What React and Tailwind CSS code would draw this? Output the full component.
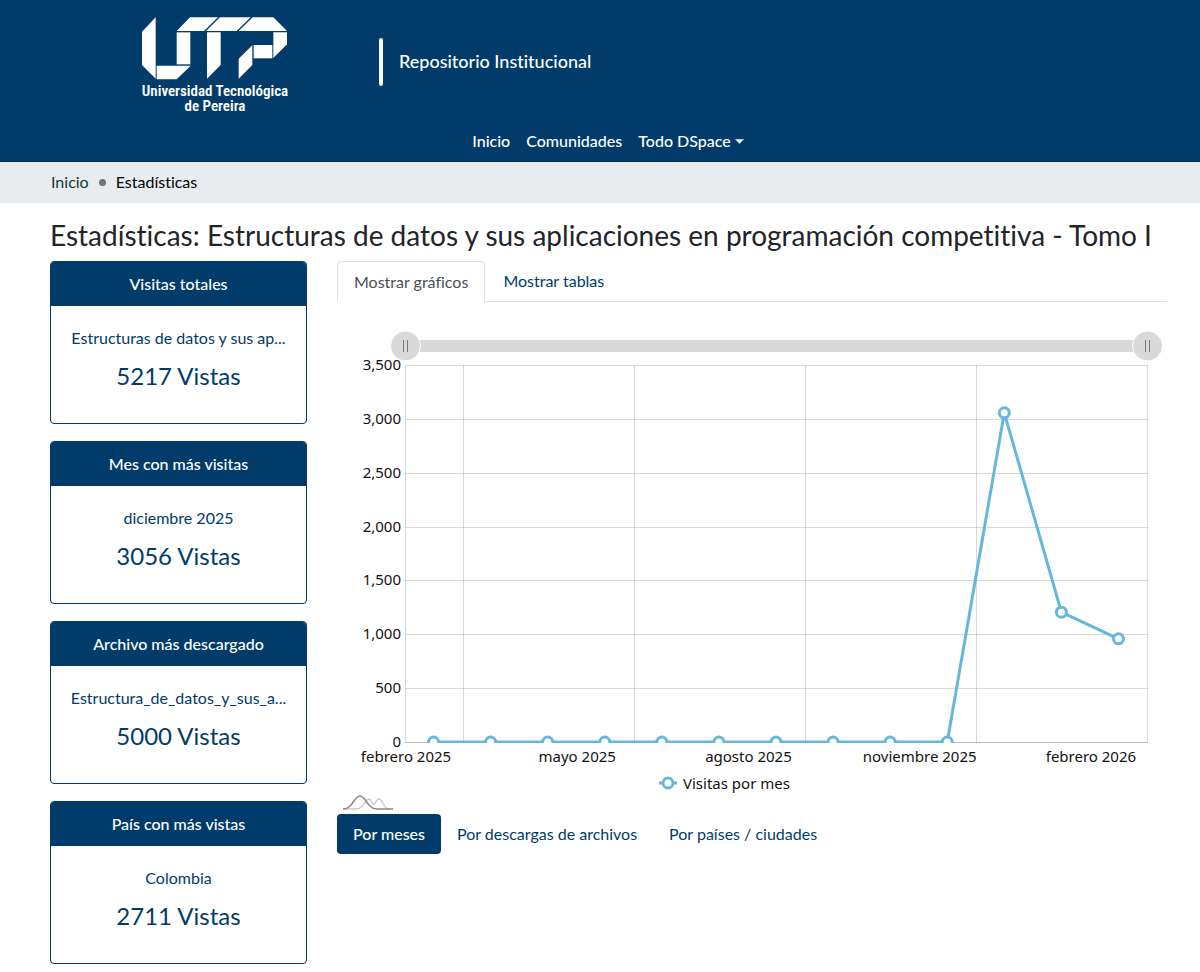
import { useState } from "react";

const cards = [
  { title: "Visitas totales", label: "Estructuras de datos y sus ap...", value: "5217 Vistas" },
  { title: "Mes con más visitas", label: "diciembre 2025", value: "3056 Vistas" },
  { title: "Archivo más descargado", label: "Estructura_de_datos_y_sus_a...", value: "5000 Vistas" },
  { title: "País con más vistas", label: "Colombia", value: "2711 Vistas" },
];

const visits = [0, 0, 0, 0, 0, 0, 0, 0, 0, 0, 3056, 1205, 958];

const monthLabels = [
  "febrero 2025",
  "mayo 2025",
  "agosto 2025",
  "noviembre 2025",
  "febrero 2026",
];

const reports = ["Por meses", "Por descargas de archivos", "Por países / ciudades"];

// plot area inside the chart
const LEFT = 68;
const RIGHT = 810;
const TOP = 55;
const BOTTOM = 432;
const STEP = (RIGHT - LEFT) / visits.length;

const xAt = (i) => LEFT + STEP * (i + 0.5);
const yAt = (v) => BOTTOM - (v / 3500) * (BOTTOM - TOP);

const Logo = () => (
  <a href="#" className="block w-[148px] text-white">
    <svg viewBox="33 48 441 192" className="w-[147px] h-[64px]" fill="currentColor" aria-hidden="true">
      <path d="M36 95 77 52V236L36 195Z" />
      <path d="M80 197H182L140 238H80Z" />
      <path d="M140 97H181V193H140Z" />
      <path d="M140 93 180 52H264L222 93Z" />
      <path d="M228 93 270 52H362L320 93Z" />
      <path d="M326 93 368 52H430L471 93Z" />
      <path d="M231 97H272V195L231 236Z" />
      <path d="M430 97H471V133L430 174Z" />
      <path d="M371 135H427V175H371Z" />
      <path d="M326 176 367 136V195L326 236Z" />
    </svg>
    <span className="flex flex-col items-center mt-1 font-['Roboto_Condensed','Lato',sans-serif] text-[15px] leading-[15px] font-semibold whitespace-nowrap">
      <span>Universidad Tecnológica</span>
      <span>de Pereira</span>
    </span>
  </a>
);

const Header = () => (
  <header className="bg-[#003b6a] border-b border-[#00284a] text-white">
    <div className="flex pl-[141px] pt-4 h-[121px]">
      <Logo />
      <div className="flex items-center gap-4 h-12 mt-[22px] ml-[90px]">
        <span className="w-1 h-12 rounded-sm bg-white" />
        <span className="pb-0.5 text-[18px] font-medium">Repositorio Institucional</span>
      </div>
    </div>
    <nav className="flex justify-center gap-4 pl-4 h-10 items-center font-medium">
      <a href="#">Inicio</a>
      <a href="#">Comunidades</a>
      <button className="flex items-center gap-1">
        Todo DSpace
        <svg viewBox="0 0 10 5" className="w-[9px] h-[5px]" fill="currentColor" aria-hidden="true">
          <path d="M0 0H10L5 5Z" />
        </svg>
      </button>
    </nav>
  </header>
);

const StatCard = ({ card }) => (
  <section className="h-[163px] border border-[#003b6a] rounded-[4px] overflow-hidden text-center text-[#003b6a]">
    <h2 className="h-11 leading-[43px] bg-[#003b6a] text-white font-medium">{card.title}</h2>
    <div className="px-4 pt-5">
      <p className="leading-6 whitespace-nowrap">{card.label}</p>
      <p className="mt-2 text-[24px] leading-9">{card.value}</p>
    </div>
  </section>
);

const Handle = ({ x }) => (
  <g>
    <circle cx={x} cy="36" r="15" fill="#d9d9d9" stroke="#fff" strokeWidth="1" />
    <path d={`M${x - 2} 30v12M${x + 2} 30v12`} stroke="#777" strokeWidth="1" />
  </g>
);

const Chart = () => {
  const points = visits.map((v, i) => `${xAt(i)},${yAt(v)}`).join(" ");

  return (
    <svg
      viewBox="0 0 830 504"
      className="block w-full font-['Noto_Sans',sans-serif] text-[15px]"
      role="img"
      aria-label="Visitas por mes"
    >
      <clipPath id="plot">
        <rect x={LEFT} y={TOP} width={RIGHT - LEFT} height={BOTTOM - TOP + 1} />
      </clipPath>

      {/* zoom bar */}
      <rect x={LEFT} y="30" width={RIGHT - LEFT} height="12" fill="#d9d9d9" />
      <Handle x={LEFT + 0.5} />
      <Handle x={RIGHT + 0.5} />

      {/* grid */}
      <g stroke="#000" strokeOpacity="0.15" transform="translate(0.5 0.5)">
        {[0, 500, 1000, 1500, 2000, 2500, 3000, 3500].map((v) => (
          <line key={v} x1={LEFT} x2={RIGHT} y1={Math.round(yAt(v))} y2={Math.round(yAt(v))} />
        ))}
        {[0, 1, 4, 7, 10, 13].map((n) => (
          <line key={n} x1={Math.ceil(LEFT + STEP * n)} x2={Math.ceil(LEFT + STEP * n)} y1={TOP} y2={BOTTOM} />
        ))}
        <line x1={LEFT} x2={RIGHT} y1={BOTTOM} y2={BOTTOM} />
      </g>

      {/* axis labels */}
      <g fill="#111">
        {[0, 500, 1000, 1500, 2000, 2500, 3000, 3500].map((v) => (
          <text key={v} x="64" y={yAt(v) + 5} textAnchor="end">
            {v.toLocaleString("en-US")}
          </text>
        ))}
        {monthLabels.map((label, i) => (
          <text key={label} x={LEFT + 1 + STEP * 3 * i} y="452" textAnchor="middle">
            {label}
          </text>
        ))}
        <text x="346" y="479">Visitas por mes</text>
      </g>

      {/* series */}
      <g clipPath="url(#plot)" stroke="#67b7dc" strokeWidth="3">
        <polyline points={points} fill="none" />
        {visits.map((v, i) => (
          <circle key={i} cx={xAt(i)} cy={yAt(v)} r="5" fill="#fff" />
        ))}
      </g>

      {/* legend marker */}
      <g stroke="#67b7dc" strokeWidth="3">
        <line x1="322" x2="340" y1="473" y2="473" />
        <circle cx="331" cy="473" r="5" fill="#fff" />
      </g>

      {/* chart library mark */}
      <g fill="none" strokeWidth="1.5">
        <path d="M6 499H20C27 499 28 489 32 489C35 489 34 494 37 494C39 494 39 489 42 489C46 489 46 499 52 499" stroke="#ccc" />
        <path d="M6 499C16 499 17 486 23 486C29 486 30 499 40 499H56" stroke="#888" />
      </g>
    </svg>
  );
};

export default function App() {
  const [report, setReport] = useState(reports[0]);

  return (
    <div className="bg-white font-['Lato',sans-serif] [font-variant-ligatures:none] text-[16px] text-[#212529]">
      <Header />

      <nav className="flex items-center gap-2 h-[41px] pl-[51px] pb-0.5 bg-[#e9ecef]">
        <a href="#" className="text-[#0a3d34]">Inicio</a>
        <span className="w-[7px] h-[7px] mt-0.5 mx-0.5 rounded-full bg-[#6c757d]" />
        <span className="text-black">Estadísticas</span>
      </nav>

      <main className="pl-[50px] pr-[33px] pt-4 pb-2">
        <h1 className="text-[28px] leading-8 whitespace-nowrap">
          Estadísticas: Estructuras de datos y sus aplicaciones en programación competitiva - Tomo I
        </h1>

        <div className="flex gap-[30px] mt-[10px]">
          <aside className="flex flex-col gap-[17px] w-[257px] shrink-0">
            {cards.map((card) => (
              <StatCard key={card.title} card={card} />
            ))}
          </aside>

          <div className="flex-1 min-w-0">
            <div className="flex h-[41px] border-b border-[#dee2e6]">
              <button className="h-[41px] px-4 border border-b-white border-[#dee2e6] rounded-t-[4px] text-[#495057]">
                Mostrar gráficos
              </button>
              <button className="px-[18px] text-[#003b6a]">Mostrar tablas</button>
            </div>

            <div className="pt-2">
              <Chart />
            </div>

            <div className="flex">
              {reports.map((name) => (
                <button
                  key={name}
                  onClick={() => setReport(name)}
                  className={
                    name === report
                      ? "h-10 px-4 rounded-[4px] bg-[#003b6a] text-white font-medium"
                      : "h-10 px-4 text-[#003b6a]"
                  }
                >
                  {name}
                </button>
              ))}
            </div>
          </div>
        </div>
      </main>
    </div>
  );
}
